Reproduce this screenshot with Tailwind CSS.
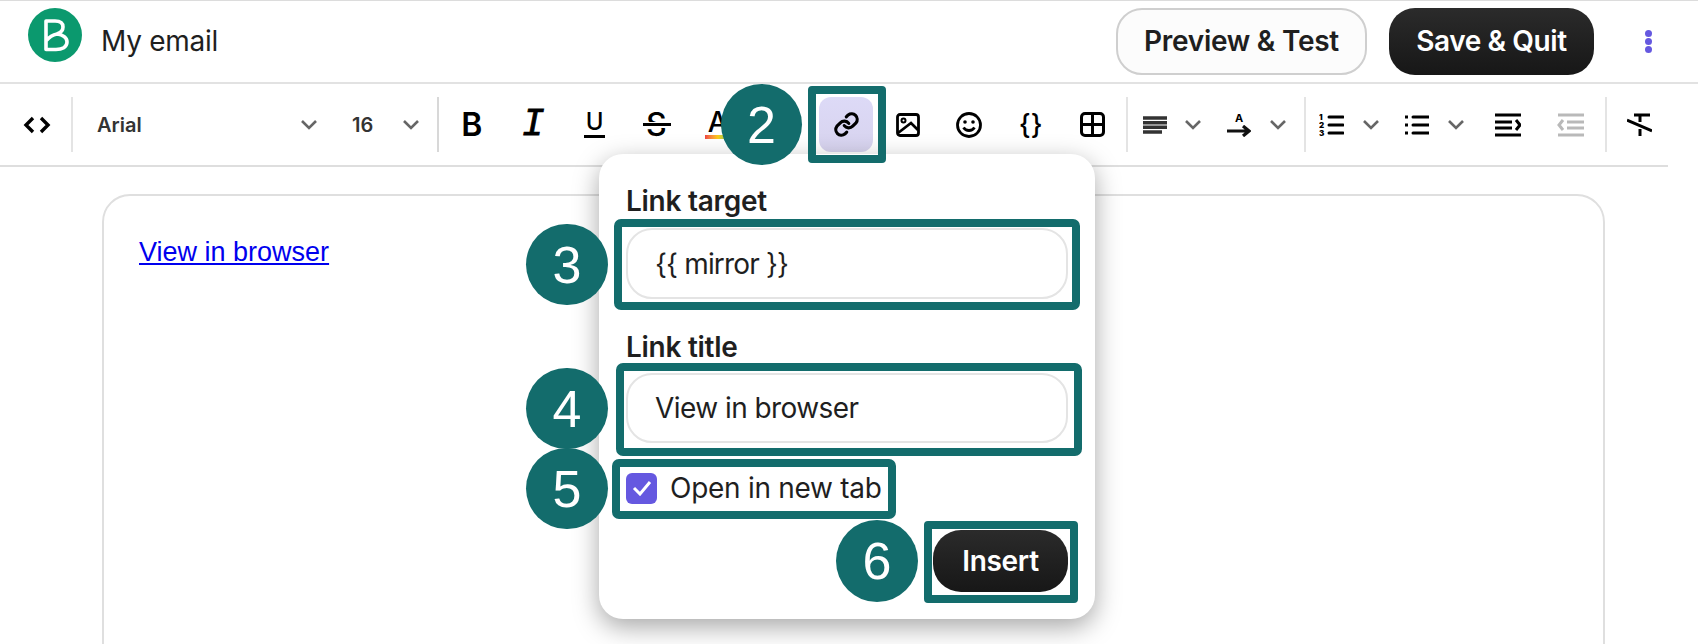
<!DOCTYPE html>
<html lang="en">

<head>
  <meta charset="UTF-8">
  <meta name="viewport" content="width=device-width, initial-scale=1.0">
  <title>My email</title>
  <script src="https://cdn.jsdelivr.net/npm/@tailwindcss/browser@4"></script>
</head>

<body class="bg-white text-[#1f1f1f] font-[Inter,sans-serif]">
  <div class="relative h-[644px] w-[1698px] overflow-hidden border-t border-[#dcdcdc]">

    <!-- header -->
    <header class="flex h-[83px] items-center border-b-2 border-[#e2e2e2] pb-[1px]">
      <svg class="mb-[12px] ml-[28px] h-[54px] w-[54px]" viewBox="0 0 54 54">
        <circle cx="27" cy="27" r="27" fill="#0b996e" />
        <path d="M18 13h9c6 0 8 3 8 6 0 4-3 6-6 7 6 .5 10 4 10 8 0 5-5 7.500-11 7.500H18zM18 33c4-5 8-6.500 11-7" fill="none" stroke="#fff" stroke-width="3.6" stroke-linejoin="round" />
      </svg>
      <span class="ml-[19px] text-[28px] leading-none tracking-[-0.01em]">My email</span>
      <button class="ml-auto flex h-[67px] w-[251px] items-center justify-center rounded-[26px] border-2 border-[#cfcfcf] bg-[#fcfcfc] text-[28px] font-semibold tracking-[-0.01em]">Preview &amp; Test</button>
      <button class="ml-[22px] flex h-[67px] w-[205px] items-center justify-center rounded-[26px] bg-gradient-to-b from-[#2b2b2b] to-[#171717] text-[28px] font-semibold tracking-[-0.015em] text-white">Save &amp; Quit</button>
      <div class="ml-[51px] mr-[46px] flex flex-col gap-[1px]">
        <span class="h-[7px] w-[7px] rounded-full bg-[#6558e0]"></span>
        <span class="h-[7px] w-[7px] rounded-full bg-[#6558e0]"></span>
        <span class="h-[7px] w-[7px] rounded-full bg-[#6558e0]"></span>
      </div>
    </header>

    <!-- toolbar -->
    <div class="flex h-[81px] items-center text-black">
      <div class="flex w-[71px] justify-center pl-[2px]">
        <svg class="h-[18px] w-[28px]" viewBox="0 0 28 18" fill="none" stroke="#000" stroke-width="3.4"><path d="M10 2 3 9l7 7M18 2l7 7-7 7" /></svg>
      </div>
      <span class="h-[55px] w-[2px] bg-[#e4e4e4]"></span>
      <span class="mt-[1px] ml-[24px] w-[204px] text-[20px] font-semibold text-[#333]">Arial</span>
      <svg class="h-[10px] w-[16px]" viewBox="0 0 16 10" fill="none" stroke="#666" stroke-width="2.6"><path d="m1 1 7 7 7-7" /></svg>
      <span class="mt-[1px] ml-[35px] w-[51px] text-[20px] font-semibold text-[#333]">16</span>
      <svg class="h-[10px] w-[16px]" viewBox="0 0 16 10" fill="none" stroke="#666" stroke-width="2.6"><path d="m1 1 7 7 7-7" /></svg>
      <span class="ml-[18px] h-[55px] w-[2px] bg-[#d8d8d8]"></span>

      <div class="ml-[2px] flex items-center">
        <span class="w-[61.5px] text-center text-[32px] leading-none font-semibold">B</span>
        <span class="w-[61.5px] text-center font-['Liberation_Mono',monospace] text-[38px] leading-none italic [-webkit-text-stroke:0.8px_black]">I</span>
        <span class="flex w-[61.5px] flex-col items-center">
          <span class="text-[24px] leading-[20px] font-medium">U</span>
          <span class="mt-[3px] h-[3px] w-[21px] bg-black"></span>
        </span>
        <span class="relative w-[61.5px] text-center text-[32px] leading-none font-medium">S
          <span class="absolute top-[13px] left-[17px] flex h-[6px] w-[28px] items-center bg-white">
            <span class="h-[3px] w-full bg-black"></span>
          </span>
        </span>
        <span class="flex w-[61.5px] flex-col items-center">
          <span class="text-[28px] leading-[24px] font-medium">A</span>
          <span class="mt-[1px] h-[4px] w-[26px] bg-gradient-to-r from-[#ef4444] via-[#facc15] to-[#22c55e]"></span>
        </span>
      </div>

      <!-- link button, active -->
      <div class="ml-[67px] flex w-[61.5px] justify-center">
        <div class="flex h-[55px] w-[54px] items-center justify-center rounded-[12px] bg-gradient-to-b from-[#dddaf7] to-[#d7d3ee]">
          <svg class="h-[27px] w-[27px]" viewBox="0 0 24 24" fill="none" stroke="#000" stroke-width="2.8" stroke-linecap="round" stroke-linejoin="round">
            <path d="M10 13a5 5 0 0 0 7.500.500l3-3a5 5 0 0 0-7-7l-1.700 1.700" />
            <path d="M14 11a5 5 0 0 0-7.500-.500l-3 3a5 5 0 0 0 7 7l1.700-1.700" />
          </svg>
        </div>
      </div>
      <div class="flex w-[61.5px] justify-center">
        <svg class="h-[24px] w-[24px]" viewBox="0 0 24 24" fill="none" stroke="#000" stroke-width="2.8">
          <rect x="1.500" y="1.500" width="21" height="21" rx="2.500" />
          <circle cx="7.500" cy="7.500" r="2" stroke-width="2" />
          <path d="M2 20 15 10l7 7" />
        </svg>
      </div>
      <div class="flex w-[61.5px] justify-center">
        <svg class="h-[26px] w-[26px]" viewBox="0 0 26 26" fill="none" stroke="#000" stroke-width="2.8">
          <circle cx="13" cy="13" r="11.500" />
          <circle cx="9" cy="10" r="1.800" fill="#000" stroke="none" />
          <circle cx="17" cy="10" r="1.800" fill="#000" stroke="none" />
          <path d="M7.500 15.500c2.500 4 8.500 4 11 0" />
        </svg>
      </div>
      <span class="w-[61.5px] text-center text-[27px] leading-none font-medium">{}</span>
      <div class="flex w-[61.5px] justify-center">
        <svg class="h-[25px] w-[25px]" viewBox="0 0 25 25" fill="none" stroke="#000" stroke-width="3">
          <rect x="1.500" y="1.500" width="22" height="22" rx="3.500" />
          <path d="M12.500 2v21M2 12.500h21" />
        </svg>
      </div>
      <span class="ml-[3px] h-[55px] w-[2px] bg-[#e4e4e4]"></span>

      <svg class="ml-[15px] h-[18px] w-[24px]" viewBox="0 0 24 18" fill="none" stroke="#333" stroke-width="3.4"><path d="M0 2h24M0 6.700h24M0 11.300h24M0 16h19" /></svg>
      <svg class="ml-[18px] h-[10px] w-[16px]" viewBox="0 0 16 10" fill="none" stroke="#666" stroke-width="2.6"><path d="m1 1 7 7 7-7" /></svg>
      <div class="ml-[26px] flex w-[24px] flex-col items-center">
        <span class="text-[11px] leading-[12px] font-bold">A</span>
        <svg class="mt-[1px] h-[12px] w-[24px]" viewBox="0 0 24 12" fill="none" stroke="#111" stroke-width="3.2"><path d="M0 6h21M16 1l6 5-6 5" /></svg>
      </div>
      <svg class="ml-[19px] h-[10px] w-[16px]" viewBox="0 0 16 10" fill="none" stroke="#666" stroke-width="2.6"><path d="m1 1 7 7 7-7" /></svg>
      <span class="ml-[18px] h-[55px] w-[2px] bg-[#e4e4e4]"></span>

      <svg class="ml-[13px] h-[24px] w-[25px]" viewBox="0 0 25 24" fill="none" stroke="#000" stroke-width="3" stroke-linecap="round">
        <path d="M10 4h14M10 12h14M10 20h14" />
        <text x="0" y="7" font-size="8" font-weight="900" fill="#000" stroke="none">1</text>
        <text x="0" y="15" font-size="8" font-weight="900" fill="#000" stroke="none">2</text>
        <text x="0" y="23" font-size="8" font-weight="900" fill="#000" stroke="none">3</text>
      </svg>
      <svg class="ml-[19px] h-[10px] w-[16px]" viewBox="0 0 16 10" fill="none" stroke="#666" stroke-width="2.6"><path d="m1 1 7 7 7-7" /></svg>
      <svg class="ml-[26px] h-[22px] w-[24px]" viewBox="0 0 24 22" fill="none" stroke="#000" stroke-width="3">
        <path d="M8 3h16M8 11h16M8 19h16" stroke-linecap="round" />
        <path d="M0 3h3M0 11h3M0 19h3" />
      </svg>
      <svg class="ml-[19px] h-[10px] w-[16px]" viewBox="0 0 16 10" fill="none" stroke="#666" stroke-width="2.6"><path d="m1 1 7 7 7-7" /></svg>
      <svg class="ml-[31px] h-[24px] w-[26px]" viewBox="0 0 26 24" fill="none" stroke="#000" stroke-width="3">
        <path d="M0 2h26M0 22h26M0 9h17M0 15h17M21 7l4 5-4 5" />
      </svg>
      <svg class="ml-[36px] h-[24px] w-[27px]" viewBox="0 0 27 24" fill="none" stroke="#b9b9b9" stroke-width="3">
        <path d="M1 2h26M1 22h26M10 9h17M10 15h17M6 7l-4 5 4 5" />
      </svg>
      <span class="ml-[21px] h-[55px] w-[2px] bg-[#e4e4e4]"></span>
      <svg class="ml-[20px] h-[24px] w-[25px]" viewBox="0 0 25 24" fill="none" stroke="#000" stroke-width="3">
        <path d="M7 2h16M13 2v7M13 16v7M0 7l25 11" />
      </svg>
    </div>
    <div class="h-[2px] w-[1668px] bg-[#dedede]"></div>

    <!-- editor -->
    <main class="mt-[27px] mr-[93px] ml-[102px] h-[600px] rounded-[28px] border-2 border-[#dfdfdf] px-[35px] py-[40px]">
      <a href="#" class="font-['Liberation_Sans',Arial,sans-serif] text-[27px] leading-[32px] text-[#0000ee] underline">View in browser</a>
    </main>

    <!-- link popover -->
    <div class="absolute top-[153px] left-[599px] flex w-[496px] flex-col rounded-[24px] bg-white px-[27px] pt-[31px] pb-[27px] shadow-[0_8px_26px_rgba(0,0,0,0.35)]">
      <label class="mb-[11px] text-[28px] leading-[32px] font-semibold tracking-[-0.01em]">Link target</label>
      <div class="flex h-[71px] items-center rounded-[26px] border-2 border-[#e4e4e4] pl-[27px] text-[28px] tracking-[-0.03em]">{{ mirror }}</div>
      <label class="mt-[32px] mb-[10px] text-[28px] leading-[32px] font-semibold tracking-[-0.01em]">Link title</label>
      <div class="flex h-[70px] items-center rounded-[26px] border-2 border-[#e4e4e4] pl-[27px] text-[28px] tracking-[-0.02em]">View in browser</div>
      <div class="mt-[30px] flex h-[30px] items-center">
        <span class="flex h-[31px] w-[31px] items-center justify-center rounded-[6px] bg-[#6558e0]">
          <svg class="h-[16px] w-[20px]" viewBox="0 0 20 16" fill="none" stroke="#fff" stroke-width="3"><path d="m2 8 6 6L18 2" /></svg>
        </span>
        <span class="ml-[13px] text-[28px] tracking-[-0.01em]">Open in new tab</span>
      </div>
      <div class="mt-[27px] flex justify-end">
        <button class="flex h-[62px] w-[135px] items-center justify-center rounded-[28px] bg-gradient-to-b from-[#2b2b2b] to-[#171717] text-[28px] font-semibold tracking-[-0.01em] text-white">Insert</button>
      </div>
    </div>

    <!-- annotations -->
    <div class="absolute top-[85px] left-[808px] h-[77px] w-[78px] rounded-[4px] border-[8px] border-[#136c6c]"></div>
    <div class="absolute top-[218px] left-[614px] h-[91px] w-[466px] rounded-[7px] border-[8px] border-[#136c6c]"></div>
    <div class="absolute top-[362px] left-[616px] h-[93px] w-[466px] rounded-[7px] border-[8px] border-[#136c6c]"></div>
    <div class="absolute top-[458px] left-[612px] h-[60px] w-[284px] rounded-[7px] border-[8px] border-[#136c6c]"></div>
    <div class="absolute top-[520px] left-[924px] h-[82px] w-[154px] rounded-[4px] border-[8px] border-[#136c6c]"></div>

    <div class="absolute top-[83px] left-[721px] flex h-[81px] w-[81px] items-center justify-center rounded-full bg-[#136c6c] font-['Liberation_Sans',sans-serif] text-[52px] text-white">2</div>
    <div class="absolute top-[223px] left-[526px] flex h-[81px] w-[82px] items-center justify-center rounded-full bg-[#136c6c] font-['Liberation_Sans',sans-serif] text-[52px] text-white">3</div>
    <div class="absolute top-[367px] left-[526px] flex h-[81px] w-[82px] items-center justify-center rounded-full bg-[#136c6c] font-['Liberation_Sans',sans-serif] text-[52px] text-white">4</div>
    <div class="absolute top-[447px] left-[526px] flex h-[81px] w-[82px] items-center justify-center rounded-full bg-[#136c6c] font-['Liberation_Sans',sans-serif] text-[52px] text-white">5</div>
    <div class="absolute top-[519px] left-[836px] flex h-[82px] w-[82px] items-center justify-center rounded-full bg-[#136c6c] font-['Liberation_Sans',sans-serif] text-[52px] text-white">6</div>
  </div>
</body>

</html>
